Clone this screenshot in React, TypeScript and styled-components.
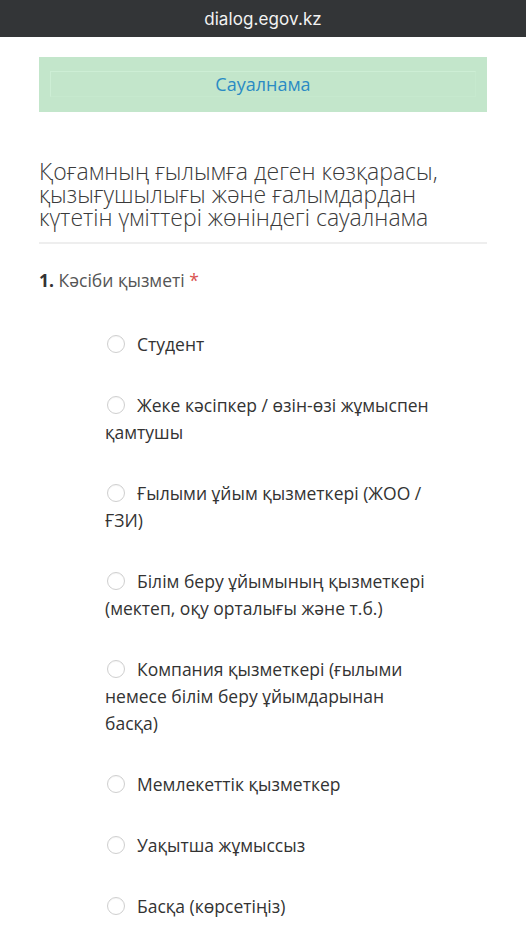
import React from "react";
import styled, { createGlobalStyle } from "styled-components";

const Global = createGlobalStyle`
  html, body { margin: 0; padding: 0; background: #ffffff; }
  body { font-family: "Open Sans", "Noto Sans", sans-serif; color: #333; }
  * { box-sizing: border-box; }
`;

const UrlBar = styled.header`
  height: 37px;
  background: #333537;
  color: #f2f2f2;
  display: flex;
  align-items: center;
  justify-content: center;
  font-family: "Inter", "Liberation Sans", sans-serif;
  font-size: 17px;
  letter-spacing: 0.1px;
`;

const Page = styled.main`
  padding: 20px 39px 40px 39px;
`;

const Banner = styled.div`
  background: #c3e6cb;
  height: 55px;
  padding: 14px 11px;
`;

const BannerInner = styled.div`
  height: 26px;
  border: 1px solid #cdeed5;
  border-right-color: #c6e9ce;
  border-bottom-color: #c6e9ce;
  display: flex;
  align-items: center;
  justify-content: center;
  color: #2a8bc4;
  font-size: 18px;
`;

const Title = styled.h1`
  margin: 48px 0 0 0;
  padding-bottom: 13px;
  border-bottom: 2px solid #eeeeee;
  font-weight: 300;
  font-size: 23px;
  line-height: 23px;
  color: #3a3a3a;
`;

const Question = styled.section`
  margin-top: 24px;
`;

const QLabel = styled.div`
  font-size: 17.5px;
  line-height: 24px;
  color: #555;
`;

const QNum = styled.b`
  color: #333;
  font-weight: 700;
`;

const Req = styled.span`
  color: #d9534f;
`;

const Options = styled.div`
  margin-top: 39px;
  padding-left: 66px;
  padding-right: 36px;
  display: flex;
  flex-direction: column;
  gap: 34px;
`;

const Option = styled.label`
  display: block;
  font-size: 17.5px;
  line-height: 27px;
  color: #333;
  white-space: pre-line;
`;

const Radio = styled.input.attrs({ type: "radio" })`
  appearance: none;
  -webkit-appearance: none;
  display: inline-block;
  width: 18px;
  height: 18px;
  margin: 0 12px 0 2px;
  border: 1.5px solid #cfcfcf;
  border-radius: 50%;
  background: #fff;
  box-shadow: inset 0 1px 1px rgba(0,0,0,0.04);
  vertical-align: -2px;
`;

const options = [
  "Студент",
  "Жеке кәсіпкер / өзін-өзі жұмыспен қамтушы",
  "Ғылыми ұйым қызметкері (ЖОО / ҒЗИ)",
  "Білім беру ұйымының қызметкері (мектеп, оқу орталығы және т.б.)",
  "Компания қызметкері (ғылыми немесе білім беру ұйымдарынан\nбасқа)",
  "Мемлекеттік қызметкер",
  "Уақытша жұмыссыз",
  "Басқа (көрсетіңіз)",
];

export default function App() {
  return (
    <>
      <Global />
      <UrlBar>dialog.egov.kz</UrlBar>
      <Page>
        <Banner>
          <BannerInner>Сауалнама</BannerInner>
        </Banner>
        <Title>
          Қоғамның ғылымға деген көзқарасы, қызығушылығы және ғалымдардан күтетін үміттері жөніндегі сауалнама
        </Title>
        <Question>
          <QLabel>
            <QNum>1.</QNum> Кәсіби қызметі <Req>*</Req>
          </QLabel>
          <Options>
            {options.map((o) => (
              <Option key={o}>
                <Radio name="q1" />
                {o}
              </Option>
            ))}
          </Options>
        </Question>
      </Page>
    </>
  );
}
